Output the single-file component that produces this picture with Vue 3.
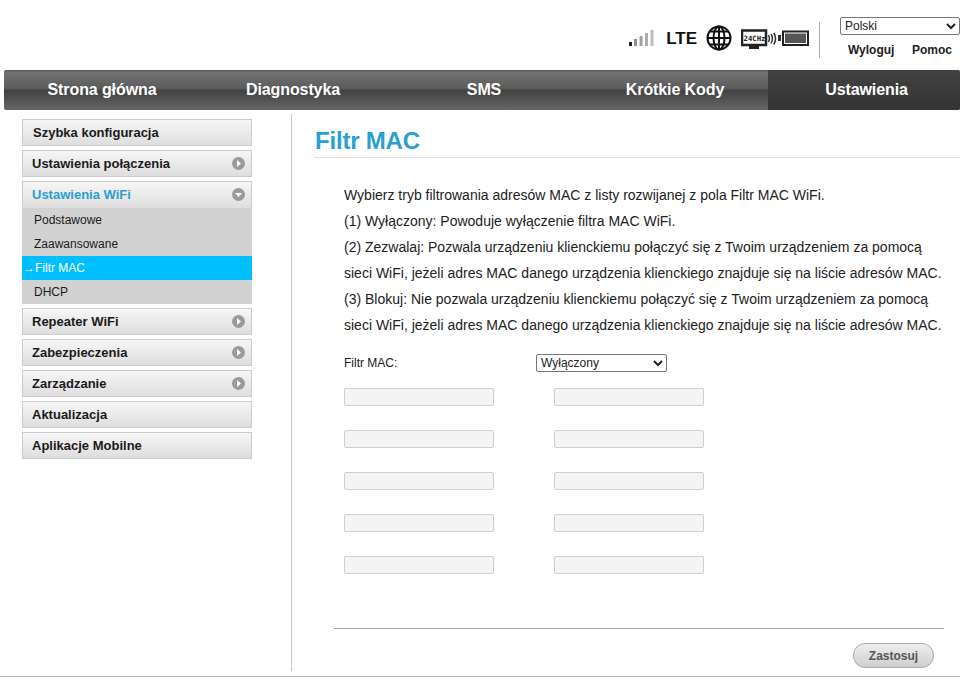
<template>
  <div class="page">
    <header class="top">
      <div class="status">
        <svg class="signal" width="25" height="18" viewBox="0 0 25 18">
          <rect x="0" y="13" width="3" height="4" fill="#222" />
          <rect x="5" y="10" width="3" height="7" fill="#8e8e8e" />
          <rect x="10.500" y="7" width="3" height="10" fill="#a0a0a0" />
          <rect x="16" y="4" width="3" height="13" fill="#adadad" />
          <rect x="21.500" y="1" width="3" height="16" fill="#bdbdbd" />
        </svg>
        <span class="lte">LTE</span>
        <svg class="globe" width="26" height="26" viewBox="0 0 26 26" fill="none" stroke="#111" stroke-width="2">
          <circle cx="13" cy="13" r="11.500" />
          <ellipse cx="13" cy="13" rx="5.500" ry="11.500" />
          <path d="M13 1.500v23M1.500 13h23M3.500 6.500h19M3.500 19.500h19" />
        </svg>
        <svg class="tv" width="36" height="20" viewBox="0 0 36 20">
          <rect x="1" y="1.500" width="24" height="14.500" fill="#fff" stroke="#222" stroke-width="2.500" />
          <text x="2.500" y="12" class="tv-text">24CHz</text>
          <path d="M8 18.500h10" stroke="#222" stroke-width="3" />
          <path d="M27.500 6q1.800 3.500 0 7M30 5q2.800 4.500 0 9.500M32.800 4q3.500 5.500 0 11.500" fill="none" stroke="#333" stroke-width="1.500" />
        </svg>
        <svg class="battery" width="31" height="16" viewBox="0 0 31 16">
          <rect x="0" y="5" width="3" height="6" fill="#333" />
          <rect x="5" y="1.500" width="25" height="13.500" fill="#fff" stroke="#222" stroke-width="2" />
          <rect x="7" y="3.500" width="21" height="9.500" fill="#555" />
        </svg>
      </div>
      <div class="top-divider"></div>
      <div class="top-right">
        <select class="lang">
          <option>Polski</option>
        </select>
        <div class="links">
          <a>Wyloguj</a>
          <a>Pomoc</a>
        </div>
      </div>
    </header>

    <nav class="mainnav">
      <a v-for="item in navItems" :key="item" :class="{ active: item === 'Ustawienia' }">{{ item }}</a>
    </nav>

    <div class="body">
      <aside class="side">
        <template v-for="item in menu" :key="item.label">
          <div class="menu-item" :class="{ open: item.children }">
            <span>{{ item.label }}</span>
            <svg v-if="item.arrow" class="arrow" width="13" height="13" viewBox="0 0 13 13">
              <circle cx="6.500" cy="6.500" r="6.500" fill="#9a9a9a" />
              <path v-if="item.children" d="M3 5h7l-3.500 4z" fill="#fff" />
              <path v-else d="M5 3l4 3.500-4 3.500z" fill="#fff" />
            </svg>
          </div>
          <ul v-if="item.children" class="submenu">
            <li v-for="sub in item.children" :key="sub" :class="{ current: sub === 'Filtr MAC' }">
              <i v-if="sub === 'Filtr MAC'">→</i>{{ sub }}
            </li>
          </ul>
        </template>
      </aside>

      <main class="content">
        <h1>Filtr MAC</h1>
        <div class="desc">
          <p v-for="line in description" :key="line">{{ line }}</p>
        </div>
        <div class="filter-row">
          <label>Filtr MAC:</label>
          <select class="filter-select">
            <option>Wyłączony</option>
          </select>
        </div>
        <div class="mac-grid">
          <input v-for="n in 10" :key="n" type="text" disabled />
        </div>
        <div class="actions">
          <button type="button">Zastosuj</button>
        </div>
      </main>
    </div>
    <div class="bottom-line"></div>
  </div>
</template>

<script setup>
const navItems = ['Strona główna', 'Diagnostyka', 'SMS', 'Krótkie Kody', 'Ustawienia']

const menu = [
  { label: 'Szybka konfiguracja' },
  { label: 'Ustawienia połączenia', arrow: true },
  { label: 'Ustawienia WiFi', arrow: true, children: ['Podstawowe', 'Zaawansowane', 'Filtr MAC', 'DHCP'] },
  { label: 'Repeater WiFi', arrow: true },
  { label: 'Zabezpieczenia', arrow: true },
  { label: 'Zarządzanie', arrow: true },
  { label: 'Aktualizacja' },
  { label: 'Aplikacje Mobilne' }
]

const description = [
  'Wybierz tryb filtrowania adresów MAC z listy rozwijanej z pola Filtr MAC WiFi.',
  '(1) Wyłączony: Powoduje wyłączenie filtra MAC WiFi.',
  '(2) Zezwalaj: Pozwala urządzeniu klienckiemu połączyć się z Twoim urządzeniem za pomocą',
  'sieci WiFi, jeżeli adres MAC danego urządzenia klienckiego znajduje się na liście adresów MAC.',
  '(3) Blokuj: Nie pozwala urządzeniu klienckiemu połączyć się z Twoim urządzeniem za pomocą',
  'sieci WiFi, jeżeli adres MAC danego urządzenia klienckiego znajduje się na liście adresów MAC.'
]
</script>

<style>
html, body {
  margin: 0;
  background: #fff;
}
</style>

<style scoped>
.page {
  width: 966px;
  height: 683px;
  overflow: hidden;
  font-family: "Liberation Sans", Arial, sans-serif;
  color: #1a1a1a;
}

/* header */
.top {
  height: 70px;
  display: flex;
  justify-content: flex-end;
  box-sizing: border-box;
  padding-right: 6px;
}
.status {
  display: flex;
  align-items: flex-start;
  margin-top: 25px;
}
.signal { margin-top: 4px; }
.lte {
  margin: 5px 9px 0 12px;
  font-size: 17px;
  line-height: 18px;
  font-weight: bold;
  color: #111;
}
.tv { margin: 4px 1px 0 9px; }
.tv-text {
  font-family: "DejaVu Sans Mono", monospace;
  font-size: 7.300px;
  font-weight: bold;
  fill: #222;
}
.battery { margin-top: 5px; }
.top-divider {
  width: 1px;
  height: 36px;
  margin: 22px 20px 0 10px;
  background: #aaa;
}
.top-right {
  width: 120px;
  margin-top: 17px;
}
.lang {
  display: block;
  width: 120px;
  height: 18px;
  font-family: "Liberation Sans", Arial, sans-serif;
  font-size: 12px;
  background: #fff;
  border: 1px solid #767676;
  border-radius: 2px;
  color: #222;
}
.links {
  display: flex;
  justify-content: space-between;
  padding: 8px 8px 0 8px;
  font-size: 12px;
  line-height: 14px;
  font-weight: bold;
  color: #222;
}

/* main nav */
.mainnav {
  margin-left: 4px;
  width: 956px;
  height: 40px;
  display: grid;
  grid-template-columns: repeat(4, 191px) 192px;
  background: linear-gradient(#555 0, #727272 6%, #5c5c5c 45%, #424242 52%, #4a4a4a 62%, #666 100%);
  border-radius: 2px;
  overflow: hidden;
}
.mainnav a {
  display: flex;
  align-items: center;
  justify-content: center;
  padding-left: 5px;
  padding-bottom: 1px;
  font-size: 16px;
  letter-spacing: -0.1px;
  font-weight: bold;
  color: #fff;
}
.mainnav a.active {
  background: linear-gradient(#424242, #333);
}

/* body */
.body {
  display: flex;
  align-items: flex-start;
  margin-top: 4px;
}
.side {
  width: 230px;
  margin: 5px 0 0 22px;
  display: flex;
  flex-direction: column;
}
.menu-item {
  height: 27px;
  box-sizing: border-box;
  margin-bottom: 4px;
  padding: 0 6px 1px 9px;
  display: flex;
  align-items: center;
  justify-content: space-between;
  border: 1px solid #ccc;
  background: linear-gradient(#f6f6f6, #dedede);
  font-size: 13px;
  font-weight: bold;
  color: #1a1a1a;
}
.menu-item:first-child span {
  margin-left: 1px;
}
.menu-item.open {
  margin-bottom: 0;
  color: #2a9fd0;
  border-bottom: 0;
}
.submenu {
  list-style: none;
  margin: 0 0 4px;
  padding: 0;
}
.submenu li {
  height: 24px;
  line-height: 24px;
  padding-left: 12px;
  background: #d2d2d2;
  font-size: 12px;
  color: #1a1a1a;
}
.submenu li.current {
  padding-left: 1px;
  background: #00bfff;
  color: #fff;
}
.submenu i {
  font-style: normal;
}

.content {
  width: 669px;
  height: 557px;
  margin-left: 39px;
  box-sizing: border-box;
  border-left: 1px solid #c8c8c8;
  padding-left: 22px;
}
h1 {
  margin: 12px 0 0;
  height: 31px;
  padding: 0 0 0 1px;
  font-size: 24px;
  line-height: 30px;
  letter-spacing: -0.2px;
  font-weight: bold;
  color: #2a9fd0;
  border-bottom: 1px solid #e2e2e2;
}
.desc {
  margin: 24px 0 0 30px;
}
.desc p {
  margin: 0;
  font-size: 14px;
  line-height: 26px;
  white-space: nowrap;
  color: #222;
}
.filter-row {
  display: flex;
  align-items: center;
  margin: 16px 0 0 30px;
  font-size: 12px;
}
.filter-row label {
  width: 192px;
}
.filter-select {
  width: 131px;
  height: 18px;
  font-family: "Liberation Sans", Arial, sans-serif;
  font-size: 12px;
  background: #fff;
  border: 1px solid #767676;
  border-radius: 2px;
  color: #222;
}
.mac-grid {
  display: grid;
  grid-template-columns: 150px 150px;
  column-gap: 60px;
  row-gap: 24px;
  margin: 16px 0 0 30px;
}
.mac-grid input {
  width: 150px;
  height: 18px;
  box-sizing: border-box;
  margin: 0;
  padding: 0;
  background: #f4f4f4;
  border: 1px solid #cfcfcf;
  border-radius: 2px;
}
.actions {
  margin: 54px 0 0 20px;
  width: 610px;
  height: 40px;
  border-top: 1px solid #a6a6a6;
  display: flex;
  justify-content: flex-end;
  align-items: flex-start;
  padding: 14px 10px 0 0;
  box-sizing: border-box;
}
.actions button {
  width: 81px;
  height: 25px;
  padding: 0;
  border: 1px solid #aaa;
  border-radius: 12px;
  background: linear-gradient(#eee, #cfcfcf);
  font-family: "Liberation Sans", Arial, sans-serif;
  font-size: 12px;
  font-weight: bold;
  color: #555;
}
.bottom-line {
  width: 960px;
  height: 1px;
  margin-top: 5px;
  background: #bbb;
}
</style>
